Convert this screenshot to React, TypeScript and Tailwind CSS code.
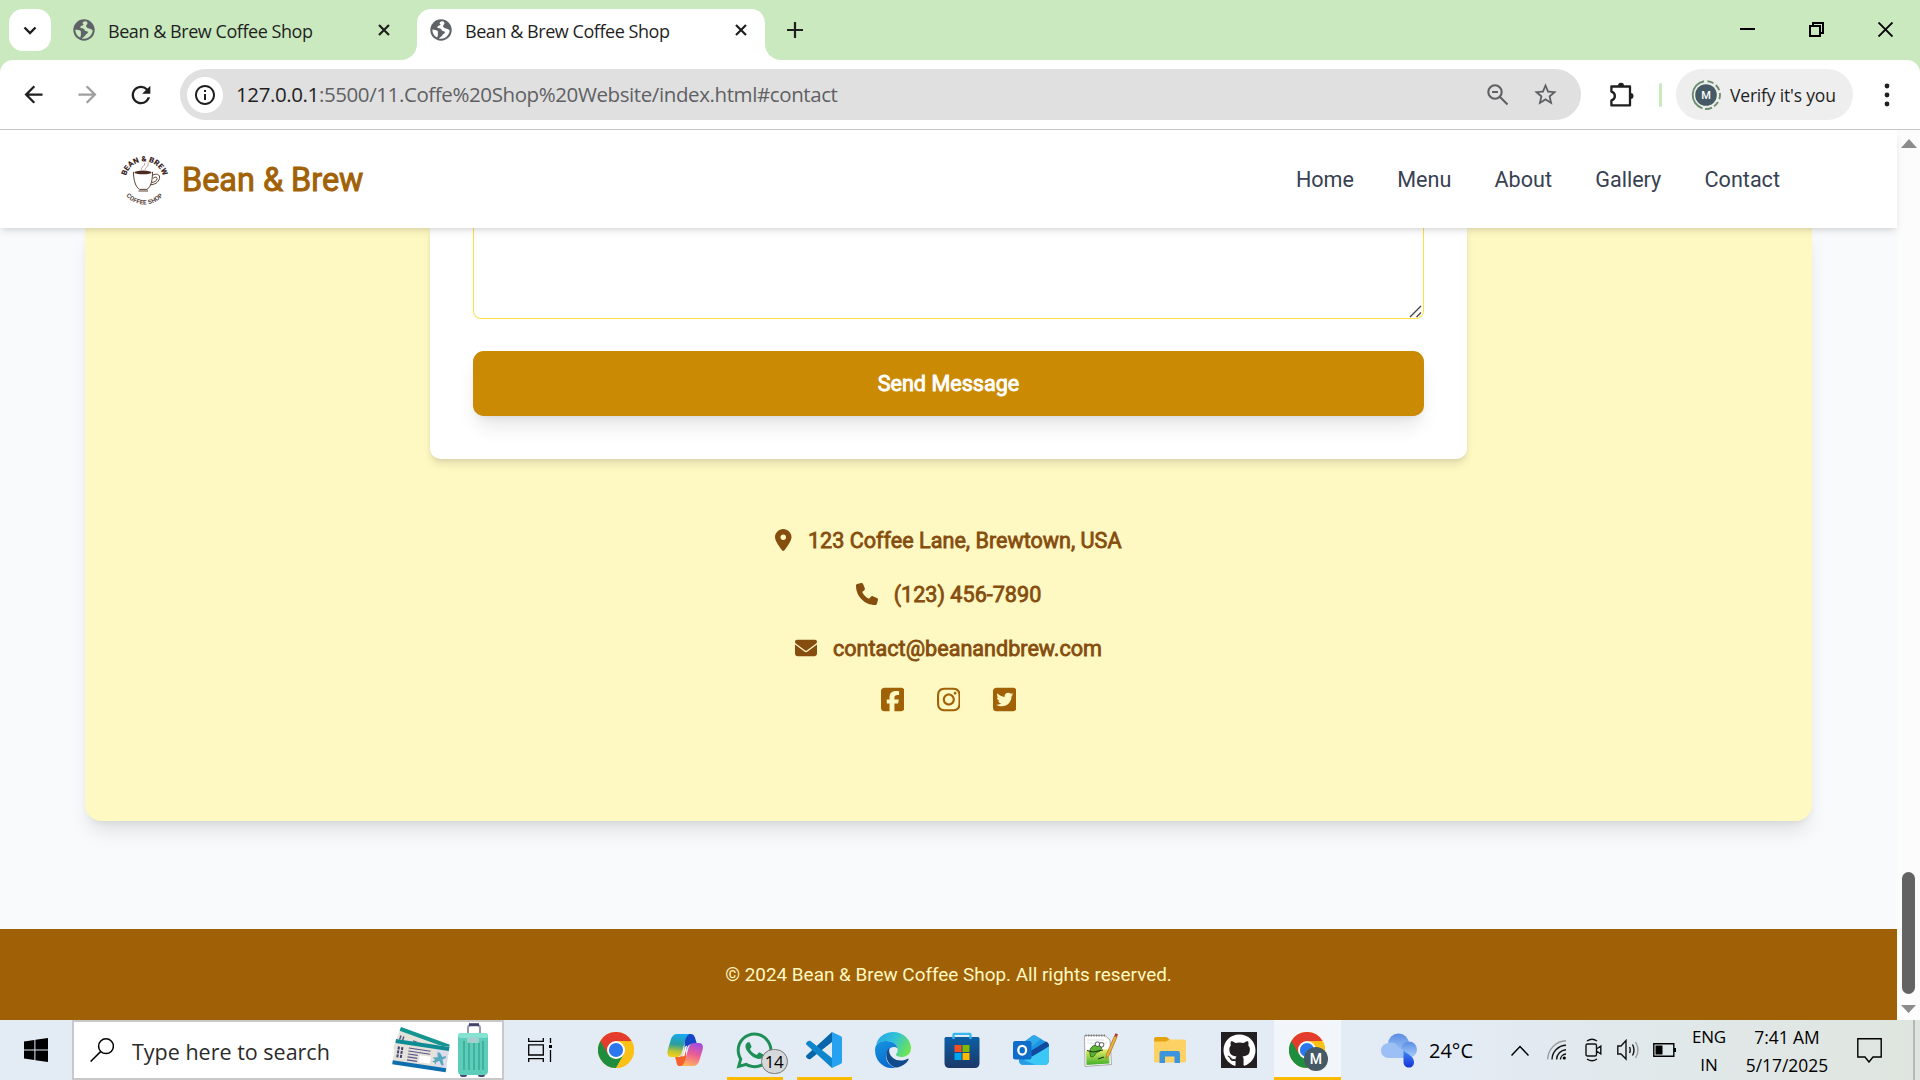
import React from "react";
import {
  FaLocationDot,
  FaPhone,
  FaEnvelope,
  FaSquareFacebook,
  FaInstagram,
  FaSquareTwitter,
  FaWhatsapp,
  FaGithub,
} from "react-icons/fa6";
import { MdArrowBack, MdArrowForward, MdRefresh, MdStarOutline, MdInfoOutline } from "react-icons/md";

const Globe = () => (
  <svg viewBox="0 0 22 22" className="h-[22px] w-[22px] shrink-0">
    <circle cx="11" cy="11" r="10.7" fill="#5f6368" />
    <path
      d="M11.5 2.2 C9 3.2 9.4 5 10.8 5.4 C9.8 7 7.6 6.4 7.2 8.2 C7.8 9.6 11 9 11.4 10.6 C11.6 12.4 13.4 12.2 14.6 12.6 C15.6 13.6 14.4 15 13 15.2 C12.2 17.2 10.6 17.8 8.8 19.4 C13.8 20.6 19.2 17 19.7 11.4 C18.4 10 16.8 9.6 15 9.2 C13.4 8.8 12.4 7 13.6 5.8 C15 5 14.6 3.4 13.6 2.6 Z M2.4 10.4 C4 10.6 6.4 10.8 7.6 12 C8.6 13.2 7.4 14 8 15.4 C7.6 16.6 7.6 18 7.2 18.6 C4 17 2.2 14 2.4 10.4 Z"
      className="fill-[var(--tab)]"
    />
  </svg>
);

const Close = () => (
  <svg viewBox="0 0 12 12" className="h-3 w-3 shrink-0">
    <path d="M1 1 L11 11 M11 1 L1 11" stroke="#1f1f1f" strokeWidth="2.2" />
  </svg>
);

const TabFlare = ({ flip = false }: { flip?: boolean }) => (
  <svg
    viewBox="0 0 16 16"
    className={flip ? "h-4 w-4 shrink-0 self-end -scale-x-100" : "h-4 w-4 shrink-0 self-end"}
  >
    <path d="M16 0 A16 16 0 0 1 0 16 H16 Z" fill="#fff" />
  </svg>
);

const TabStrip = () => (
  <div className="flex h-[60px] items-stretch bg-[#cae9bf] text-[#1f1f1f]">
    <div className="mt-[9px] ml-[9px] flex h-[42px] w-[42px] items-center justify-center rounded-[14px] bg-white">
      <svg viewBox="0 0 14 9" className="h-[9px] w-[14px]">
        <path d="M1.5 1.5 L7 7 L12.5 1.5" fill="none" stroke="#1f1f1f" strokeWidth="2.4" />
      </svg>
    </div>
    <div className="ml-[22px] flex w-[328px] items-center [--tab:#cae9bf]">
      <Globe />
      <span className="ml-[13px] w-[270px] pt-[3px] text-[18px] whitespace-nowrap">
        <span className="tracking-[-0.45px]">Bean &amp; Brew Coffee Shop</span>
      </span>
      <Close />
    </div>
    <TabFlare />
    <div className="mt-[9px] flex w-[348px] items-center rounded-t-[14px] bg-white pb-[9px] pl-[13px] [--tab:#ffffff]">
      <Globe />
      <span className="ml-[13px] w-[270px] pt-[3px] text-[18px] whitespace-nowrap">
        <span className="tracking-[-0.45px]">Bean &amp; Brew Coffee Shop</span>
      </span>
      <Close />
    </div>
    <TabFlare flip />
    <svg viewBox="0 0 16 16" className="ml-[6px] h-4 w-4 self-center">
      <path d="M8 0 V16 M0 8 H16" stroke="#1f1f1f" strokeWidth="2.2" />
    </svg>
    <div className="mr-[27px] ml-auto flex items-center gap-[54px] pb-[2px]">
      <svg viewBox="0 0 15 15" className="h-[15px] w-[15px]">
        <path d="M0 7 H15" stroke="#000" strokeWidth="2" />
      </svg>
      <svg viewBox="0 0 15 15" className="h-[15px] w-[15px]">
        <path d="M1 4 H11 V14 H1 Z M4 4 V1 H14 V11 H11" fill="none" stroke="#000" strokeWidth="2" />
      </svg>
      <svg viewBox="0 0 15 15" className="h-[15px] w-[15px]">
        <path d="M0.5 0.5 L14.5 14.5 M14.5 0.5 L0.5 14.5" stroke="#000" strokeWidth="1.9" />
      </svg>
    </div>
  </div>
);

const Toolbar = () => (
  <div className="bg-[#cae9bf]">
    <div className="flex h-[70px] items-center rounded-t-[13px] border-b border-[#c6c6c6] bg-white text-[#1f1f1f]">
      <div className="ml-[6px] flex h-full items-center">
        <div className="flex w-[54px] justify-center">
          <MdArrowBack size={27} />
        </div>
        <div className="flex w-[54px] justify-center text-[#9e9e9e]">
          <MdArrowForward size={27} />
        </div>
        <div className="flex w-[54px] justify-center">
          <MdRefresh size={28} />
        </div>
      </div>
      <div className="ml-[12px] flex h-[51px] w-[1401px] items-center rounded-full bg-[#e0e0e0] pl-[7px]">
        <div className="flex h-9 w-9 items-center justify-center rounded-full bg-white">
          <MdInfoOutline size={24} />
        </div>
        <span className="ml-[13px] text-[20.5px] whitespace-nowrap text-[#5f6063]">
          <span className="tracking-[-0.4px]">
            <span className="text-[#1f1f1f]">127.0.0.1</span>:5500/11.Coffe%20Shop%20Website/index.html#contact
          </span>
        </span>
        <svg viewBox="0 0 22 22" className="mr-[23px] ml-auto h-[22px] w-[22px]">
          <g fill="none" stroke="#5f6063" strokeWidth="2.1">
            <circle cx="8" cy="8" r="6.7" />
            <path d="M12.8 12.8 L20.5 20.5 M5 8 H11" />
          </g>
        </svg>
        <MdStarOutline size={27} className="mr-[22px] text-[#5f6063]" />
      </div>
      <svg viewBox="0 0 26 26" className="ml-[28px] h-[26px] w-[26px]">
        <path
          d="M2.4 4.5 H21 V23.4 H2.4 V18.4 C7 17 7 10.8 2.4 9.6 Z"
          fill="none"
          stroke="#1f1f1f"
          strokeWidth="2.3"
          strokeLinejoin="round"
        />
        <path d="M9 4 A3 3.2 0 0 1 15 4 Z M21.5 11 A3 3 0 0 1 21.5 17 Z" fill="#1f1f1f" />
      </svg>
      <div className="ml-[24px] h-6 w-[3px] rounded-full bg-[#cae9bf]" />
      <div className="ml-[14px] flex h-[51px] w-[177px] items-center rounded-full bg-[#eeeeee] pl-[15px]">
        <svg viewBox="0 0 30 30" className="h-[30px] w-[30px] shrink-0">
          <path d="M13 1.2 A14 14 0 0 0 11.5 28.3" fill="none" stroke="#6b8f6d" strokeWidth="1.9" />
          <path
            d="M16.5 1.2 A14 14 0 0 1 22.5 3.2 M24.8 5 A14 14 0 0 1 28.2 10.3 M28.8 13 A14 14 0 0 1 28.3 19.3 M27 22 A14 14 0 0 1 23 26.2 M21 27.6 A14 14 0 0 1 14 29"
            fill="none"
            stroke="#6b8f6d"
            strokeWidth="1.9"
          />
          <circle cx="15" cy="15" r="10.8" fill="#455a64" />
          <text x="15" y="19" textAnchor="middle" fontFamily="Roboto" fontSize="11" fontWeight="500" fill="#fff">
            M
          </text>
        </svg>
        <span className="ml-[9px] pt-px text-[17.5px] tracking-[-0.18px] whitespace-nowrap">Verify it's you</span>
      </div>
      <svg viewBox="0 0 6 26" className="ml-[31px] h-[26px] w-[6px]">
        <circle cx="3" cy="4" r="2.4" fill="#1f1f1f" />
        <circle cx="3" cy="13" r="2.4" fill="#1f1f1f" />
        <circle cx="3" cy="22" r="2.4" fill="#1f1f1f" />
      </svg>
    </div>
  </div>
);

const Logo = () => (
  <svg viewBox="0 0 54 54" className="h-[54px] w-[54px]">
    <defs>
      <path id="arcTop" d="M8.5 27.5 A 19 19 0 0 1 46.5 27.5" />
      <path id="arcBottom" d="M3.5 27.5 A 24 24 0 0 0 51.5 27.5" />
    </defs>
    <text fontFamily="Roboto" fontWeight="900" fontSize="7.6" fill="#3b241b">
      <textPath href="#arcTop" startOffset="50%" textAnchor="middle" textLength="50">
        BEAN &amp; BREW
      </textPath>
    </text>
    <text fontFamily="Roboto" fontWeight="700" fontSize="6.2" fill="#54413a">
      <textPath href="#arcBottom" startOffset="50%" textAnchor="middle" textLength="42">
        COFFEE SHOP
      </textPath>
    </text>
    <g transform="translate(0 -1.6)">
      <ellipse cx="26" cy="21" rx="8.6" ry="1.8" fill="#4a2c20" />
      <path
        d="M16.5 20.5 C16.5 29 18.5 35.5 22.5 38 H30 C34 35.5 35.5 29 35.5 20.5 M21.5 39.6 H31 M35.4 24 C39 21.5 43.5 23 42.5 27 C41.5 31 37.5 33.5 33.4 33.2 M36 27 C38 25 40.5 25.5 40 27.5 C39.5 29.8 37 31 34.8 31"
        fill="none"
        stroke="#5b4036"
        strokeWidth="1"
      />
      <path
        d="M24.5 18.5 C23 16 29 14.5 27.5 11.5 M28 18.5 C27.5 16.5 32.5 15 31 11"
        fill="none"
        stroke="#a08d84"
        strokeWidth="0.8"
      />
    </g>
  </svg>
);

const SiteHeader = () => (
  <header className="relative z-10 flex h-[98px] shrink-0 items-center bg-white pt-[2px] pr-[117px] pl-[117px] shadow-[0_5.4px_8.1px_-1.35px_rgb(0_0_0/0.1),0_2.7px_5.4px_-2.7px_rgb(0_0_0/0.1)]">
    <Logo />
    <span className="ml-[11px] text-[32.4px] leading-none whitespace-nowrap text-[#a16207] [-webkit-text-stroke:1px_#a16207]">
      Bean &amp; Brew
    </span>
    <nav className="ml-auto flex gap-[43.2px] text-[21.6px] text-[#374151]">
      {["Home", "Menu", "About", "Gallery", "Contact"].map((l) => (
        <a key={l}>{l}</a>
      ))}
    </nav>
  </header>
);

const Site = () => (
  <div className="flex w-[1897px] flex-col bg-[#f9fafb] font-[Roboto,sans-serif]">
    <SiteHeader />
    <div className="h-[701px] overflow-hidden">
      <section className="ml-[85px] flex h-[593px] w-[1727px] flex-col items-center rounded-b-[16.2px] bg-[#fef8c3] shadow-[0_13.5px_20.25px_-4px_rgb(0_0_0/0.1),0_5.4px_8.1px_-5.4px_rgb(0_0_0/0.1)]">
        <div className="flex h-[231px] w-[1037px] shrink-0 flex-col rounded-b-[10.8px] bg-white px-[43px] shadow-[0_5.4px_8.1px_-1.35px_rgb(0_0_0/0.1),0_2.7px_5.4px_-2.7px_rgb(0_0_0/0.1)]">
          <div className="flex h-[91px] items-end justify-end rounded-b-[8px] border border-t-0 border-[#fde047]">
            <svg viewBox="0 0 14 14" className="h-[14px] w-[14px]">
              <path d="M1 13 L12 2 M7.5 13 L12 8.5" stroke="#444" strokeWidth="1.4" />
            </svg>
          </div>
          <button className="mt-[32px] h-[65px] rounded-[10.8px] bg-[#ca8a04] pt-[2px] text-[21.6px] text-white shadow-[0_13.5px_20.25px_-4px_rgb(0_0_0/0.1),0_5.4px_8.1px_-5.4px_rgb(0_0_0/0.1)] [-webkit-text-stroke:0.9px_#fff]">
            Send Message
          </button>
        </div>
        <div className="mt-[54px] flex flex-col items-center text-[21.6px] text-[#854d0e] [&_span]:pt-[2px] [&_span]:[-webkit-text-stroke:0.8px_#854d0e]">
          <p className="flex h-[54px] items-center gap-[16px]">
            <FaLocationDot size={22} className="w-[16.5px]" />
            <span>123 Coffee Lane, Brewtown, USA</span>
          </p>
          <p className="flex h-[54px] items-center gap-[16px]">
            <FaPhone size={22} />
            <span>(123) 456-7890</span>
          </p>
          <p className="flex h-[54px] items-center gap-[16px]">
            <FaEnvelope size={22} />
            <span>contact@beanandbrew.com</span>
          </p>
        </div>
        <div className="mt-[11px] flex gap-[32.4px] text-[#a16207]">
          <FaSquareFacebook size={27} className="w-[23.6px]" />
          <FaInstagram size={27} className="w-[23.6px]" />
          <FaSquareTwitter size={27} className="w-[23.6px]" />
        </div>
      </section>
    </div>
    <footer className="flex h-[91px] items-center justify-center bg-[#a06006] pt-[2px] text-[18.9px] text-[#fef9c3]">
      © 2024 Bean &amp; Brew Coffee Shop. All rights reserved.
    </footer>
  </div>
);

const Scrollbar = () => (
  <div className="flex w-[23px] flex-col items-center bg-[#fcfcfc] pt-[9px]">
    <svg viewBox="0 0 16 9" className="h-[9px] w-4">
      <path d="M0 9 L8 0 L16 9 Z" fill="#8b8b8b" />
    </svg>
    <div className="mt-[724px] h-[122px] w-[13px] rounded-full bg-[#636363]" />
    <svg viewBox="0 0 15 8" className="mt-[11px] h-2 w-[15px]">
      <path d="M0 0 L7.5 8 L15 0 Z" fill="#8b8b8b" />
    </svg>
  </div>
);

const Chrome = () => (
  <svg viewBox="0 0 36 36" className="h-9 w-9">
    <circle cx="18" cy="18" r="18" fill="#fbbc05" />
    <path d="M18 18 L2.4 9 A18 18 0 0 0 18 36 L25.8 22.5 Z" fill="#1e8e3e" />
    <path d="M18 9 H33.6 A18 18 0 0 0 2.4 9 L10.2 22.5 Z" fill="#e33b2e" />
    <path d="M18 9 H33.6 A18 18 0 0 1 18 36 L25.8 22.5 Z" fill="#fbc116" />
    <circle cx="18" cy="18" r="9" fill="#fff" />
    <circle cx="18" cy="18" r="7.1" fill="#2b78ee" />
  </svg>
);

const Copilot = () => (
  <svg viewBox="0 0 36 36" className="h-9 w-9">
    <defs>
      <linearGradient id="cpA" x1="0.4" y1="0" x2="0.3" y2="1">
        <stop offset="0" stopColor="#19a8ef" />
        <stop offset="0.45" stopColor="#2b9d9b" />
        <stop offset="0.75" stopColor="#b9c436" />
        <stop offset="1" stopColor="#f8cf1a" />
      </linearGradient>
      <linearGradient id="cpB" x1="0.7" y1="0" x2="0.4" y2="1">
        <stop offset="0" stopColor="#a24be0" />
        <stop offset="0.5" stopColor="#ec5f94" />
        <stop offset="1" stopColor="#ffb25e" />
      </linearGradient>
    </defs>
    <path d="M17 2 H24 C27 2 28 5 29 9 L30 12 H25 C21 12 19.5 16 18 22 Z" fill="#1546c8" />
    <path d="M19 34 H12 C9.5 34 9.5 29 8 25 H12 C16 25 17 20 19 13 Z" fill="#f4622d" />
    <path d="M10 2 H23 C19.5 3 18.5 7 17.5 11 L15 20 C14 24 12 25 9 25 H4 C0 25 0 21 1 17 L4 7 C5 4 7 2 10 2 Z" fill="url(#cpA)" />
    <path d="M26 34 H14 C17 33 18 29 19 25 L21.5 16 C22.5 12 25 11 28 11 H32 C36 11 36.5 15 35.5 18 L32.5 28 C31.5 32 29 34 26 34 Z" fill="url(#cpB)" />
    <path d="M20.2 13.5 L17.4 24 L14.8 24.6 Q16.2 22.6 17 19.5 L18.4 14.5 Z" fill="#fff" />
  </svg>
);

const VsCode = () => (
  <svg viewBox="0 0 36 36" className="h-9 w-9">
    <path d="M26 0 V10 L4.5 27 C3 28 1 26.5 0.3 25.3 C0 24.5 0 23.7 0.8 23 Z" fill="#0766a9" />
    <path d="M26 36 V26 L4.5 9 C3 8 1 9.5 0.3 10.7 C0 11.5 0 12.3 0.8 13 Z" fill="#0f85cc" />
    <path d="M26 0 L34.5 4 C35.5 4.5 36 5.2 36 6.3 V29.7 C36 30.8 35.5 31.5 34.5 32 L26 36 Z" fill="#27a2f0" />
  </svg>
);

const Edge = () => (
  <svg viewBox="0 0 36 36" className="h-9 w-9">
    <defs>
      <linearGradient id="edTop" x1="0" y1="0.2" x2="1" y2="0.6">
        <stop offset="0" stopColor="#22a9e8" />
        <stop offset="0.5" stopColor="#33c3d5" />
        <stop offset="1" stopColor="#6ee650" />
      </linearGradient>
      <linearGradient id="edLow" x1="0" y1="0" x2="0.4" y2="1">
        <stop offset="0" stopColor="#1695e0" />
        <stop offset="1" stopColor="#0a6cce" />
      </linearGradient>
    </defs>
    <path d="M1 13 C3 5 10 0 18 0 C28 0 36 7.5 36 16 C36 21.5 32 25 27 25 C23.5 25 21 23.8 21 22.7 C21 21.8 22.7 21 22.7 17.5 C22.7 12 17 9 11.5 9 C6.5 9 2.5 11 1 13 Z" fill="url(#edTop)" />
    <path d="M0.1 17 C0.5 11.5 5 9 11.5 9 C17 9 22 12 22.6 16.5 C20 13.5 14 15 12 20 C9 27.5 14 34 21 35.8 C10 38 -0.8 29.5 0.1 17 Z" fill="url(#edLow)" />
    <path d="M14.5 16 C11 18.5 10.5 24 12.5 28.5 C14.5 33 19 36 22.5 35.4 C27.5 34.2 31.5 31.5 33.4 28 C34 26.8 33 26.6 32 27 C27.5 29.3 21.5 29 18 26 C14.5 23 13.5 19.5 14.5 16 Z" fill="#114a8b" />
  </svg>
);

const Store = () => (
  <svg viewBox="0 0 36 36" className="h-9 w-9">
    <defs>
      <linearGradient id="stBag" x1="0" y1="0" x2="0" y2="1">
        <stop offset="0" stopColor="#0b5fa5" />
        <stop offset="1" stopColor="#1c3768" />
      </linearGradient>
    </defs>
    <path d="M9.5 8 V2.5 Q9.5 1.8 10.3 1.8 H25.7 Q26.5 1.8 26.5 2.5 V8" fill="none" stroke="#35b7f1" strokeWidth="2.2" />
    <path d="M2 5 H34 Q35.5 5 35.5 6.5 V31 Q35.5 36 30.5 36 H5.5 Q0.5 36 0.5 31 V6.5 Q0.5 5 2 5 Z" fill="url(#stBag)" />
    <path d="M9.5 7 V5 M26.5 7 V5" stroke="#35b7f1" strokeWidth="2.2" />
    <path d="M10.5 13 H17.5 V20 H10.5 Z" fill="#f25022" />
    <path d="M18.5 13 H25.5 V20 H18.5 Z" fill="#7fba00" />
    <path d="M10.5 21 H17.5 V28 H10.5 Z" fill="#00a4ef" />
    <path d="M18.5 21 H25.5 V28 H18.5 Z" fill="#ffb900" />
  </svg>
);

const Outlook = () => (
  <svg viewBox="0 0 36 36" className="h-9 w-9">
    <path d="M8 12 L19 4 Q21 2.5 23 4 L34 10.5 Q36 12 36 14 V28 Q36 33 31 33 H11 Q6 33 6 28 Z" fill="#1c96e3" />
    <path d="M8 14 L19 4 Q21 2.5 23 4 L28 7 L12 20 Z" fill="#2fa9e8" />
    <path d="M16 20 L33 9.6 Q36 11 36 14 L20 26 Z" fill="#0f4a9e" />
    <path d="M36 14.5 V28 Q36 33 31 33 H11 Q7 33 6 30 L20 24 Z" fill="#3cc8f5" />
    <path d="M6 26 L22 32.8 H11 Q6 33 6 28 Z" fill="#2a9be6" />
    <rect x="0" y="9" width="18.5" height="18.5" rx="2.2" fill="#0f6cc9" />
    <ellipse cx="9.2" cy="18.2" rx="3.9" ry="4.4" fill="none" stroke="#fff" strokeWidth="2.3" />
  </svg>
);

const Notepad = () => (
  <svg viewBox="0 0 36 36" className="h-9 w-9">
    <defs>
      <linearGradient id="npGrass" x1="0" y1="0" x2="0" y2="1">
        <stop offset="0" stopColor="#eef36a" />
        <stop offset="1" stopColor="#3fae29" />
      </linearGradient>
    </defs>
    <path d="M1.5 3.5 H22 L27 8 L28.5 32.5 L2 34.5 Z" fill="#fff" stroke="#a9a9a9" strokeWidth="1" />
    <path d="M2.5 3.6 H22" stroke="#777" strokeWidth="2" strokeDasharray="1.3 1.3" />
    <path d="M4 8 H21 M4 11 H24" stroke="#c9d3dd" strokeWidth="0.7" />
    <path d="M3 19 L26 17 L26.5 31.5 L3.5 33 Z" fill="url(#npGrass)" />
    <path d="M7 22 C6 15 11 12 16 13 C20 14 19 19 15 20 C11 21 13 25 8 25 Z" fill="#5cb531" stroke="#245c18" strokeWidth="0.8" />
    <circle cx="14.5" cy="12.2" r="2.3" fill="#fff" stroke="#333" strokeWidth="0.8" />
    <circle cx="18.6" cy="12.8" r="2.3" fill="#fff" stroke="#333" strokeWidth="0.8" />
    <path d="M4 18.5 L10 20 L20 18 M15 27 L21 25" stroke="#223318" strokeWidth="1.1" fill="none" />
    <path d="M31.5 4 L34 5 L26 23.5 L23 26.5 L23.4 22.4 Z" fill="#f0b03c" stroke="#a66a18" strokeWidth="0.7" />
    <path d="M32.3 1.2 L35 2.3 L34 5 L31.4 4 Z" fill="#b33d34" />
  </svg>
);

const Folder = () => (
  <svg viewBox="0 0 36 36" className="h-9 w-9">
    <path d="M2 7 Q2 5 4 5 H14 Q15.5 5 16.5 6.5 L18 8 H32 Q34 8 34 10 V28 Q34 30 32 30 H4 Q2 30 2 28 Z" fill="#e6a310" />
    <path d="M2 9.5 H14 L18 7.5 H32 Q34 7.5 34 9.5 V28.5 Q34 30.5 32 30.5 H4 Q2 30.5 2 28.5 Z" fill="#fdd163" />
    <path d="M7.5 31 V21 Q7.5 19 9.5 19 H26 Q28 19 28 21 V31 H22.5 V24.5 H13 V31 Z" fill="#3b94dc" />
  </svg>
);

const Tickets = () => (
  <svg viewBox="0 0 104 58" className="h-[58px] w-[104px]">
    <g transform="translate(11 6) rotate(20)">
      <rect width="52" height="23" fill="#e5e2dc" />
      <rect width="52" height="4" fill="#12968f" />
      <path d="M3 8 V20 M6 8 V20 M16 9 H40 M16 13 H40" stroke="#55527c" strokeWidth="1.4" />
    </g>
    <g transform="translate(6 18) rotate(8.5)">
      <rect width="54" height="25" fill="#e5e2dc" />
      <rect x="42" width="12" height="25" fill="#dcdcea" />
      <rect width="54" height="4" fill="#0e8c93" />
      <rect y="21.5" width="54" height="4" fill="#0d6fae" />
      <path d="M4 7 V19 M7.5 7 V19" stroke="#44406e" strokeWidth="2" strokeDasharray="3 1" />
      <path d="M14 7 H36 M14 10 H36 M14 13 H24 M14 16 H24 M14 19 H24" stroke="#5a5687" strokeWidth="1.1" />
      <rect x="26" y="12.5" width="11" height="7" fill="#fff" />
      <path
        d="M39 13 L44 12 L43 7 L45.5 7 L48.5 11 L52 9.5 L52 11.5 L49 13.5 L51 19 L49 19.5 L46 15 L43 17 L43 19.5 L41.5 17.5 L39 17 L42 15 Z"
        fill="#55a8bd"
      />
    </g>
    <path d="M78 14 V7 Q78 4 81 4 H87 Q90 4 90 7 V14" fill="none" stroke="#9a9aac" strokeWidth="2" />
    <path d="M79 3.7 H89" stroke="#42426a" strokeWidth="3" />
    <rect x="70" y="51" width="7" height="5" rx="2" fill="#4b4a76" />
    <rect x="88" y="51" width="7" height="5" rx="2" fill="#4b4a76" />
    <rect x="68" y="12" width="30" height="42" rx="4" fill="#5ccdb9" />
    <rect x="68" y="12" width="30" height="5" rx="2.5" fill="#84e3d2" />
    <path d="M74 20 V49 M79 22 V49 M84 22 V49 M89 22 V49 M93 20 V49" stroke="#36a292" strokeWidth="1.3" />
    <rect x="77" y="16" width="12" height="6" rx="2.5" fill="#a5cfcc" />
  </svg>
);

const AppCell = ({ children }: { children: React.ReactNode }) => (
  <div className="flex w-[69.3px] items-center justify-center">{children}</div>
);

const Taskbar = () => (
  <div className="flex h-[60px] bg-linear-to-r from-[#e3ebf5] from-75% to-[#dfe5de] text-black">
    <div className="flex w-[72px] items-center pl-6">
      <svg viewBox="0 0 24 24" className="h-6 w-6">
        <path d="M0 3.4 L10.4 1.9 V11.5 H0 Z M11.4 1.7 L24 0 V11.5 H11.4 Z M0 12.5 H10.4 V22.1 L0 20.6 Z M11.4 12.5 H24 V24 L11.4 22.3 Z" />
      </svg>
    </div>
    <div className="flex w-[432px] items-center border-2 border-[#c9c9cb] bg-white pl-[16px]">
      <svg viewBox="0 0 24 24" className="h-6 w-6">
        <g fill="none" stroke="#000" strokeWidth="1.5">
          <circle cx="16" cy="8.2" r="7.4" />
          <path d="M10.6 13.6 L0.6 23.5" />
        </g>
      </svg>
      <span className="ml-[18px] pt-[4px] text-[21.5px] whitespace-nowrap text-[#2b2b2b]">Type here to search</span>
      <div className="mr-[8px] ml-auto">
        <Tickets />
      </div>
    </div>
    <div className="flex w-[77px] items-center pl-[24px]">
      <svg viewBox="0 0 25 24" className="h-6 w-[25px]">
        <path
          d="M0.7 0 V3.3 H15.3 V0 M0.7 24 V20.7 H15.3 V24 M0.7 6.8 H15.3 V17 H0.7 Z M22.5 0 V5 M22.5 12 V24"
          fill="none"
          stroke="#000"
          strokeWidth="1.3"
        />
        <path d="M21 7 H24 V10 H21 Z" />
      </svg>
    </div>
    <AppCell>
      <Chrome />
    </AppCell>
    <AppCell>
      <Copilot />
    </AppCell>
    <div className="relative flex w-[69.3px] items-center justify-center pl-px">
      <FaWhatsapp size={41} className="text-[#1f8f58]" />
      <div className="absolute top-[29px] left-[41px] flex h-[25px] w-[27px] items-center justify-center rounded-full border border-[#777] bg-[#d6d9dc] text-[17px] leading-none tracking-[-0.5px]">
        14
      </div>
      <div className="absolute bottom-0 left-[7px] h-[3px] w-14 bg-[#ffb900]" />
    </div>
    <div className="relative flex w-[69.3px] items-center justify-center">
      <VsCode />
      <div className="absolute bottom-0 left-[8px] h-[3px] w-[55px] bg-[#ffb900]" />
    </div>
    <AppCell>
      <Edge />
    </AppCell>
    <AppCell>
      <Store />
    </AppCell>
    <AppCell>
      <Outlook />
    </AppCell>
    <AppCell>
      <Notepad />
    </AppCell>
    <AppCell>
      <Folder />
    </AppCell>
    <AppCell>
      <div className="flex h-9 w-9 items-center justify-center bg-[#231f20]">
        <FaGithub size={33} className="text-white" />
      </div>
    </AppCell>
    <div className="relative flex w-[67px] items-center justify-center border-b-3 border-[#ffb900] bg-[#f2f6fa] pt-[3px]">
      <Chrome />
      <div className="absolute top-[27px] left-[30px] flex h-6 w-6 items-center justify-center rounded-full bg-[#455a64] font-[Roboto] text-[14px] font-medium text-white">
        M
      </div>
    </div>
    <div className="ml-[40px] flex items-center">
      <svg viewBox="0 0 36 36" className="h-9 w-9">
        <defs>
          <linearGradient id="wxCloud" x1="0" y1="0" x2="0" y2="1">
            <stop offset="0" stopColor="#5a8ee2" />
            <stop offset="1" stopColor="#a9cbf9" />
          </linearGradient>
          <linearGradient id="wxDrop" x1="0" y1="0" x2="0" y2="1">
            <stop offset="0" stopColor="#3f8cf5" />
            <stop offset="1" stopColor="#1733d8" />
          </linearGradient>
        </defs>
        <circle cx="17.5" cy="12" r="10.5" fill="url(#wxCloud)" />
        <circle cx="28" cy="17.5" r="8" fill="url(#wxCloud)" />
        <path d="M8 11 C14 9 17 14 18 17 C22 16 26 20 25.5 26 H8 C3 26 0 22.5 0 18.5 C0 14 4 11 8 11 Z" fill="#9cc0f5" />
        <path d="M22.5 18 C23 21 33 23 33 30 C33 33.5 31 35.5 28 35.5 C25 35.5 22.5 33.5 22.5 30 Z" fill="url(#wxDrop)" />
      </svg>
      <span className="ml-[12px] w-[82px] pt-[2px] text-[20px] whitespace-nowrap">24°C</span>
      <svg viewBox="0 0 18 11" className="h-[11px] w-[18px]">
        <path d="M0.5 10.5 L9 1.5 L17.5 10.5" fill="none" stroke="#000" strokeWidth="1.5" />
      </svg>
      <svg viewBox="0 0 20 20" className="ml-[18px] h-5 w-5">
        <path d="M0.7 19.5 A19 19 0 0 1 19 0.8" fill="none" stroke="#9a9da0" strokeWidth="1.4" />
        <path d="M5 19.5 A14.5 14.5 0 0 1 19 5.3 M9.6 19.5 A10 10 0 0 1 19 9.8 M13.4 19.5 A6 6 0 0 1 19 14" fill="none" stroke="#111" strokeWidth="1.4" />
        <circle cx="17.3" cy="18" r="1.6" />
      </svg>
      <svg viewBox="0 0 17 24" className="ml-[18px] h-6 w-[17px]">
        <path
          d="M2 3 Q7 -0.5 12 3 M2 21 Q7 24.5 12 21 M2.5 6 H10 Q11.5 6 11.5 7.5 V16.5 Q11.5 18 10 18 H2.5 Q1 18 1 16.5 V7.5 Q1 6 2.5 6 Z M11.5 11 L15.8 8 V16 L11.5 13"
          fill="none"
          stroke="#111"
          strokeWidth="1.4"
        />
      </svg>
      <svg viewBox="0 0 23 22" className="ml-[15px] h-[22px] w-[23px]">
        <path d="M0.8 7 H4 L9 1.5 V20 L4 15 H0.8 Z M12.5 8 Q14 11 12.5 14 M15.5 5.5 Q18.5 11 15.5 16.5" fill="none" stroke="#111" strokeWidth="1.4" />
        <path d="M18.5 3 Q23.5 11 18.5 19" fill="none" stroke="#9a9da0" strokeWidth="1.4" />
      </svg>
      <svg viewBox="0 0 23 14" className="ml-[13px] h-[14px] w-[23px]">
        <path d="M0.8 0.8 H20.8 V13.2 H0.8 Z" fill="none" stroke="#000" strokeWidth="1.4" />
        <path d="M2.5 2.5 H9.5 V11.5 H2.5 Z M21 5 H23 V9 H21 Z" />
      </svg>
    </div>
    <div className="ml-[13px] flex w-[40px] flex-col items-center justify-center pt-[2px] text-[17px] leading-[28px] whitespace-nowrap">
      <span className="tracking-[-0.3px]">ENG</span>
      <span>IN</span>
    </div>
    <div className="ml-[12px] flex w-[92px] flex-col items-center justify-center pt-[2px] text-[17.4px] leading-[28px] whitespace-nowrap">
      <span>7:41 AM</span>
      <span>5/17/2025</span>
    </div>
    <svg viewBox="0 0 25 26" className="ml-[24px] h-[26px] w-[25px] self-center">
      <path d="M0.8 1.8 H24.2 V20 H16 L12 25 L8 20 H0.8 Z" fill="none" stroke="#000" strokeWidth="1.4" />
    </svg>
    <div className="mr-[5px] ml-auto w-[2px] bg-[#b4b8b6]" />
  </div>
);

export default function App() {
  return (
    <div className="flex h-[1080px] w-[1920px] flex-col overflow-hidden bg-white font-['Open_Sans',sans-serif]">
      <TabStrip />
      <Toolbar />
      <div className="flex h-[890px]">
        <Site />
        <Scrollbar />
      </div>
      <Taskbar />
    </div>
  );
}
